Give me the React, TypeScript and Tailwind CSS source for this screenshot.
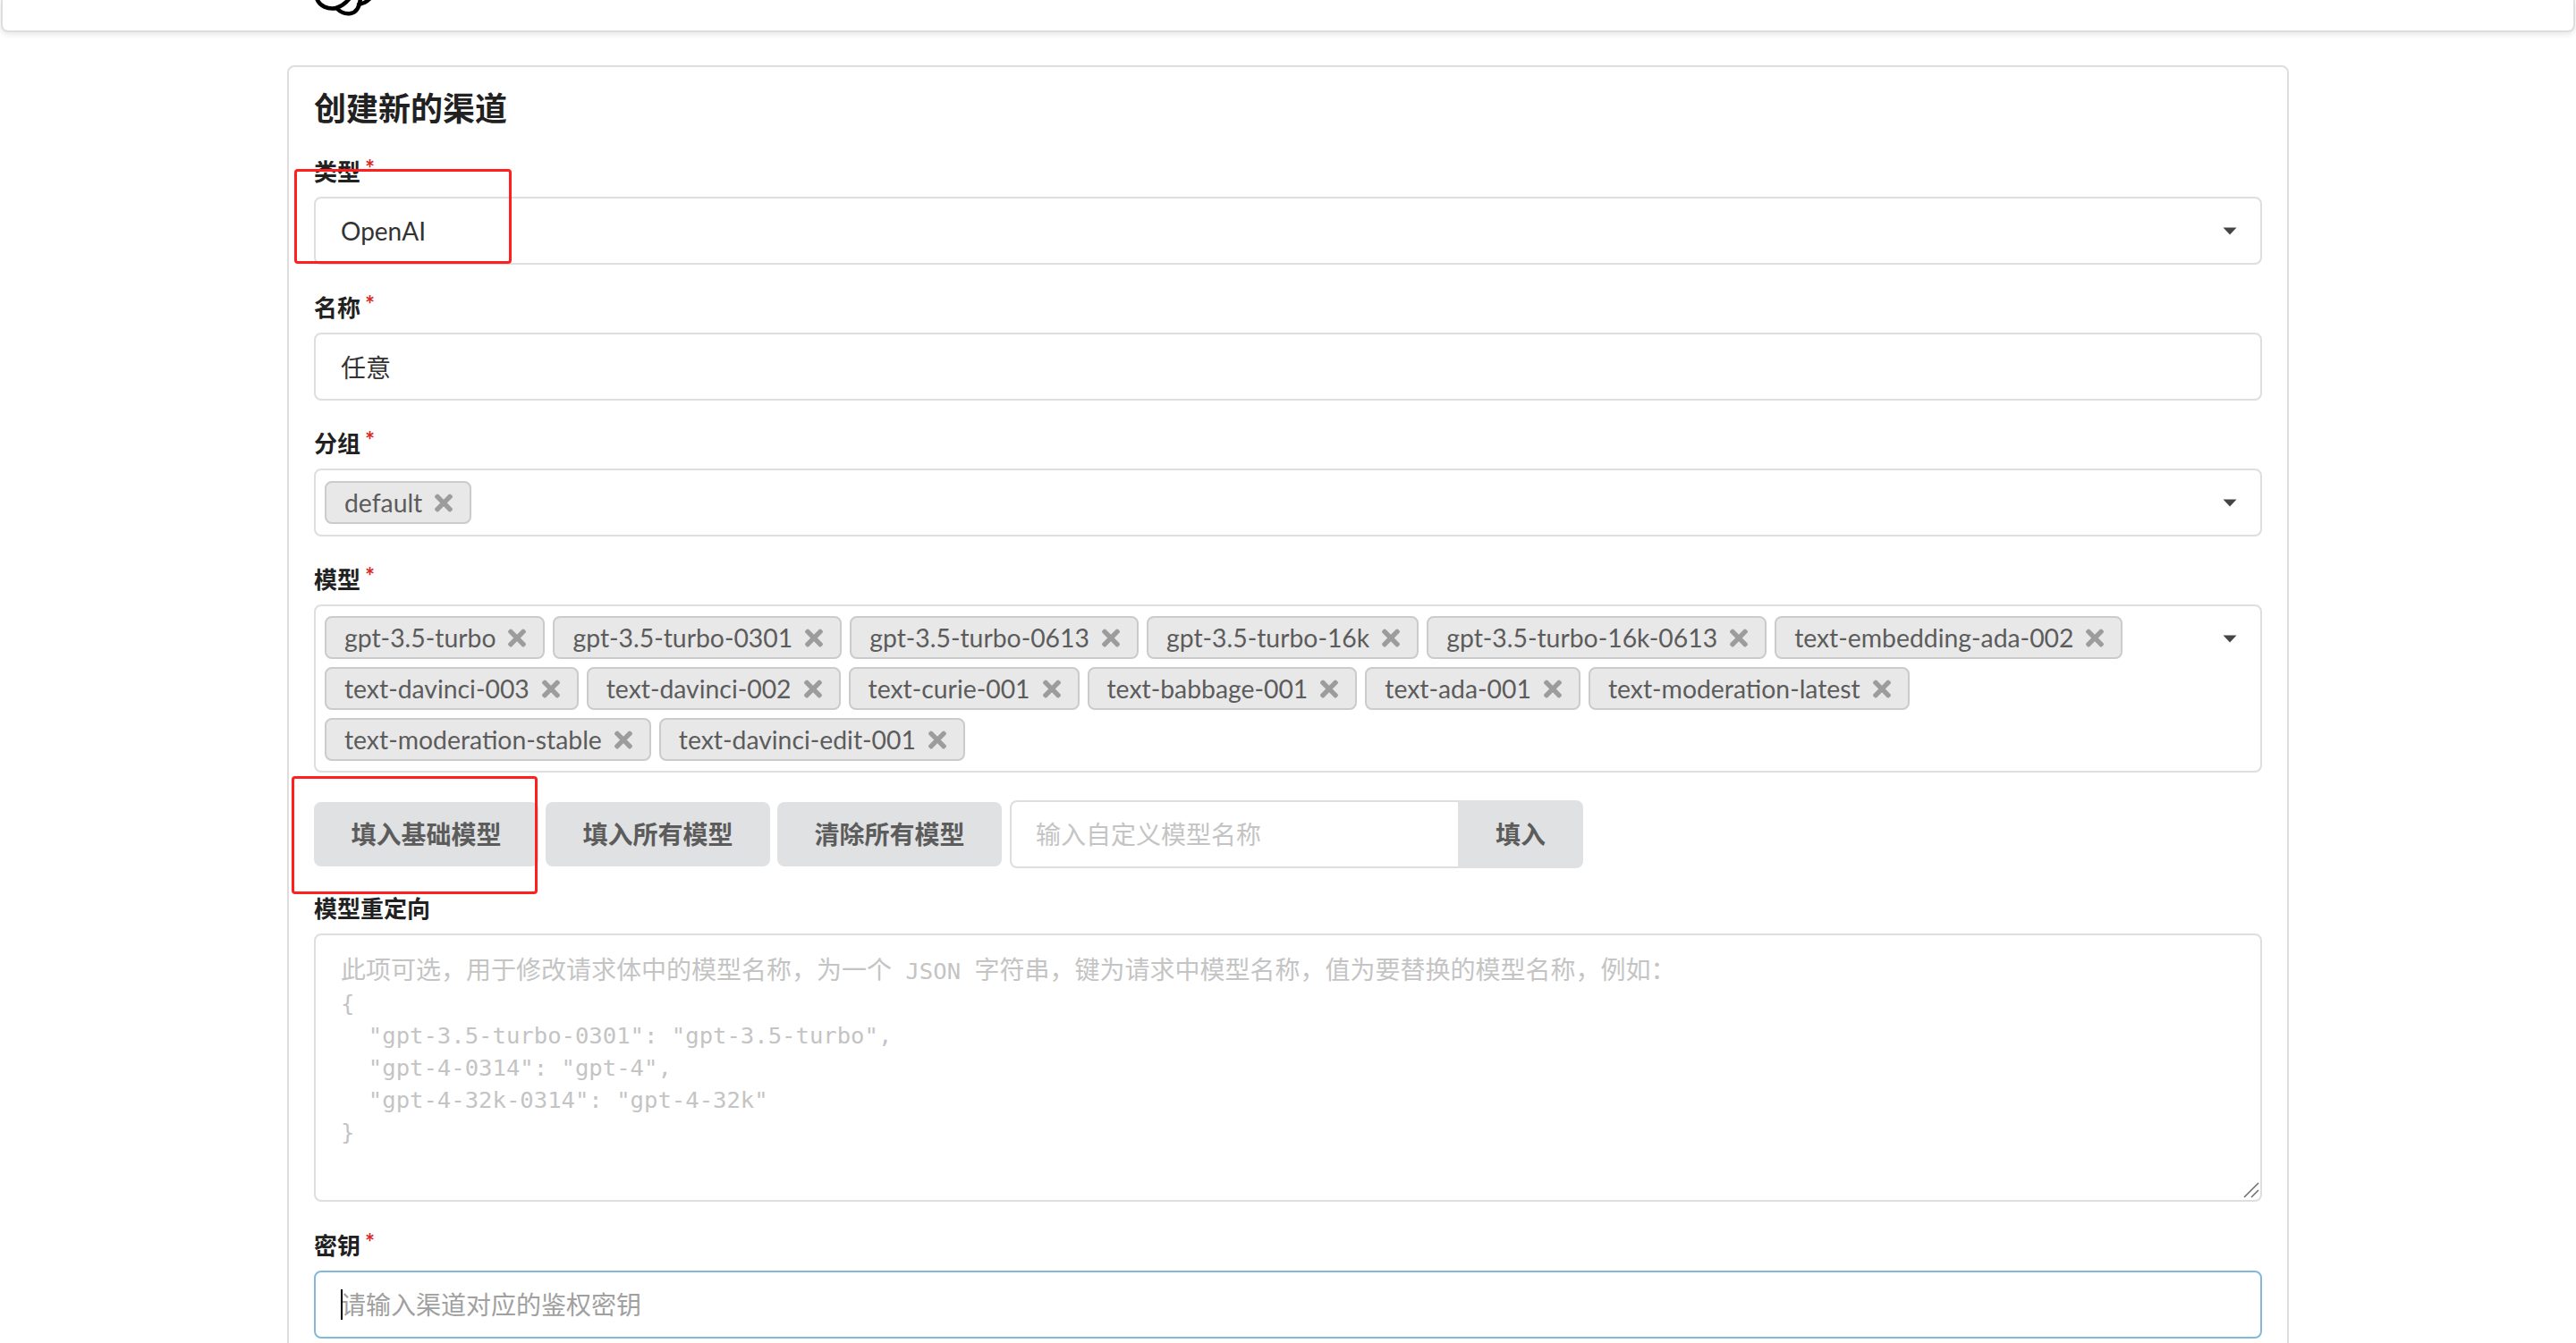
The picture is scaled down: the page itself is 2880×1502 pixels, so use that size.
import React from 'react';
import { FaTimes } from 'react-icons/fa';

const groups = ['default'];

const modelNames = [
  'gpt-3.5-turbo',
  'gpt-3.5-turbo-0301',
  'gpt-3.5-turbo-0613',
  'gpt-3.5-turbo-16k',
  'gpt-3.5-turbo-16k-0613',
  'text-embedding-ada-002',
  'text-davinci-003',
  'text-davinci-002',
  'text-curie-001',
  'text-babbage-001',
  'text-ada-001',
  'text-moderation-latest',
  'text-moderation-stable',
  'text-davinci-edit-001',
];

const Caret = () => (
  <svg width="16" height="9" viewBox="0 0 16 9" className="shrink-0">
    <path d="M0.5 0.5 H15.5 L8 8.5 Z" fill="#444444" />
  </svg>
);

const FieldLabel = ({ text, required = true }: { text: string; required?: boolean }) => (
  <label className="block h-[37px] mb-2 text-[26px] leading-[34px] font-bold text-[#212121]">
    {text}
    {required && <span className="inline-block align-top ml-[5px] -mt-[4px] text-[#db2828]">*</span>}
  </label>
);

const Tag = ({ name }: { name: string }) => (
  <span className="flex items-center h-12 pl-5 pr-[19px] gap-[14px] bg-[#e8e8e8] border-2 border-[#cbcbcb] rounded-lg text-[28.35px] text-[#5c5c5c]">
    {name}
    <FaTimes className="w-[20px] h-[29px] text-[#9c9c9c]" />
  </span>
);

const inputBase =
  "block w-full h-[76px] pl-7 pr-7 bg-white border-2 rounded-lg text-[28px] text-[#333333] outline-none";

const ActionButton = ({ text }: { text: string }) => (
  <button className="w-[251px] h-[72px] bg-[#e0e1e2] rounded-lg text-[28px] font-bold text-[#5c5c5c]">{text}</button>
);

const Cjk = ({ children }: { children: string }) => (
  <span className="text-[28px] font-['Lato','Noto_Sans_CJK_SC',sans-serif]">{children}</span>
);

export default function App() {
  return (
    <div className="relative h-[1502px] overflow-hidden bg-white font-['Lato','Noto_Sans_CJK_SC',sans-serif]">
      {/* top nav, scrolled almost out of view */}
      <div className="relative h-[36px] mx-[1px] bg-white border-2 border-t-0 border-[#dedede] rounded-b-lg shadow-[0_2px_6px_rgba(34,36,38,0.12)]">
        <svg className="absolute left-0 top-0" width="460" height="34" viewBox="0 0 460 34" fill="none" stroke="#000000" strokeWidth="4.5" strokeLinecap="round">
          <path d="M351 -2 C354 7 364 11 373 9 C377 13 383 16 389 15 C395 14 399 8 400 -2" />
          <path d="M373 9 C379 7 384 3 388 -2" />
          <path d="M398 5 C403 4 407 2 410 -1" />
        </svg>
      </div>

      <div className="w-[2238px] ml-[321px] mt-[37px] pt-[22px] px-7 pb-10 bg-white border-2 border-[#dedede] rounded-lg">
        <h1 className="h-[48px] mb-[30px] text-[36px] leading-[48px] font-bold text-[#212121]">创建新的渠道</h1>

        <div className="mb-[31px]">
          <FieldLabel text="类型" />
          <div className="flex items-center justify-between h-[76px] pl-7 pr-[26px] border-2 border-[#dedede] rounded-lg text-[28px] text-[#333333]">
            OpenAI
            <Caret />
          </div>
        </div>

        <div className="mb-[31px]">
          <FieldLabel text="名称" />
          <input className={inputBase + " border-[#dedede]"} defaultValue="任意" readOnly />
        </div>

        <div className="mb-[31px]">
          <FieldLabel text="分组" />
          <div className="flex items-center justify-between h-[76px] pl-[10px] pr-[26px] border-2 border-[#dedede] rounded-lg">
            <div className="flex gap-[9px]">
              {groups.map((g) => <Tag key={g} name={g} />)}
            </div>
            <Caret />
          </div>
        </div>

        <div className="mb-[31px]">
          <FieldLabel text="模型" />
          <div className="flex items-start justify-between py-[11px] pl-[10px] pr-[26px] border-2 border-[#dedede] rounded-lg">
            <div className="flex flex-wrap gap-[9px] w-[2100px]">
              {modelNames.map((m) => <Tag key={m} name={m} />)}
            </div>
            <div className="mt-[21px]"><Caret /></div>
          </div>
        </div>

        <div className="flex items-center gap-2 h-[76px] mb-[28px]">
          <ActionButton text="填入基础模型" />
          <ActionButton text="填入所有模型" />
          <ActionButton text="清除所有模型" />
          <div className="flex h-[76px] w-[641px] ml-px">
            <input className="flex-1 min-w-0 pl-[27px] pr-4 border-2 border-r-0 border-[#dedede] rounded-l-lg text-[28px] outline-none placeholder:text-[#c4c4c4]" placeholder="输入自定义模型名称" />
            <button className="w-[140px] bg-[#e0e1e2] rounded-r-lg text-[28px] font-bold text-[#5c5c5c]">填入</button>
          </div>
        </div>

        <div className="mb-[32px]">
          <FieldLabel text="模型重定向" required={false} />
          <div className="relative h-[300px] pt-5 pl-7 border-2 border-[#dedede] rounded-lg whitespace-pre font-['DejaVu_Sans_Mono',monospace] text-[25.6px] leading-[36px] text-[#c4c4c4]">
            <Cjk>此项可选，用于修改请求体中的模型名称，为一个</Cjk>{' JSON '}<Cjk>字符串，键为请求中模型名称，值为要替换的模型名称，例如：</Cjk>
            {'\n{\n  "gpt-3.5-turbo-0301": "gpt-3.5-turbo",\n  "gpt-4-0314": "gpt-4",\n  "gpt-4-32k-0314": "gpt-4-32k"\n}'}
            {/* resize grip */}
            <svg className="absolute right-[1px] bottom-[2px]" width="18" height="18" viewBox="0 0 18 18" stroke="#666666" strokeWidth="1.5">
              <path d="M1 17 L17 1" />
              <path d="M9 17 L17 9" />
            </svg>
          </div>
        </div>

        <div>
          <FieldLabel text="密钥" />
          <div className="relative">
            <input className={inputBase + " border-[#85b7d9] placeholder:text-[#a0a0a0]"} placeholder="请输入渠道对应的鉴权密钥" />
            <span className="absolute left-[30px] top-[21px] w-[2px] h-[34px] bg-black" />
          </div>
        </div>
      </div>

      {/* red annotation boxes drawn over the screenshot */}
      <div className="absolute left-[329px] top-[189px] w-[243px] h-[106px] border-[3px] border-[#ff1f1f] rounded-sm pointer-events-none" />
      <div className="absolute left-[326px] top-[868px] w-[275px] h-[132px] border-[3px] border-[#ff1f1f] rounded-sm pointer-events-none" />
    </div>
  );
}
